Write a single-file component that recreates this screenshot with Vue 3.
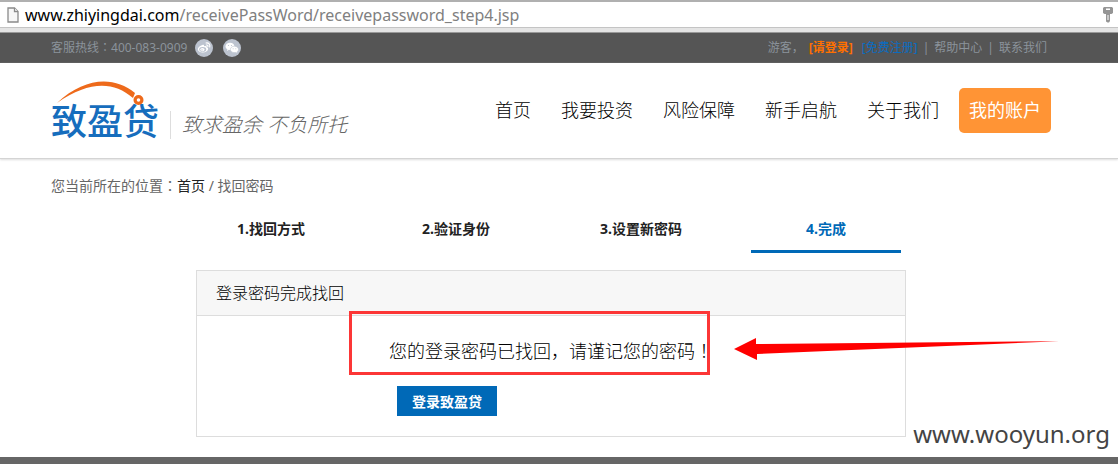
<script setup>
const nav = ['首页', '我要投资', '风险保障', '新手启航', '关于我们']
const steps = ['1.找回方式', '2.验证身份', '3.设置新密码', '4.完成']
const activeStep = 3
</script>

<template>
  <div class="page">
    <div class="address">
      <svg class="doc" width="12" height="16" viewBox="0 0 12 16" aria-hidden="true">
        <path d="M1 1h6.500l3.500 3.500V15H1z" fill="#f7f7f7" stroke="#8a8a8a" stroke-width="1.300" />
        <path d="M7.500 1v3.500H11" fill="#fff" stroke="#8a8a8a" stroke-width="1.300" />
      </svg>
      <span class="url"><span class="host">www.zhiyingdai.com</span>/receivePassWord/receivepassword_step4.jsp</span>
      <svg class="key" width="10" height="16" viewBox="0 0 10 16" aria-hidden="true">
        <path fill="#959595" fill-rule="evenodd" d="M1 0h8l1 1v5L8.500 7H7v7l-1 1.500H4.500L3 14.500V7H1.500L0 6V1zM3 1.500V3h4V1.500zM4.500 8v5h1V8z" />
      </svg>
    </div>

    <div class="topbar">
      <div class="wrap topbar-row">
        <span>客服热线<span class="mark">：</span>400-083-0909</span>
        <a class="social" href="#" aria-label="微博">
          <svg width="18" height="18" viewBox="0 0 18 18" aria-hidden="true">
            <circle cx="9" cy="9" r="9" fill="#bcc3cf" />
            <path fill="#fff" d="M7.300 6c1.200-.500 2 0 1.700 1.200 1.800-.700 3-.200 2.700 1.100 1 .300 1.600 1 1.400 1.900-.300 1.900-2.700 3.300-5.300 3.300-2.800 0-5-1.300-5-3.200C2.800 8.600 5 6.800 7.300 6z" />
            <ellipse cx="7.700" cy="10.400" rx="3.500" ry="2.300" fill="#bcc3cf" />
            <ellipse cx="7.400" cy="10.600" rx="2.100" ry="1.700" fill="#fff" />
            <circle cx="7" cy="10.900" r=".7" fill="#bcc3cf" />
            <path fill="none" stroke="#fff" stroke-width="1.100" stroke-linecap="round" d="M11 4c2.700-.5 4.400 1.400 3.700 4M11.300 6c1.200-.2 1.900.500 1.600 1.600" />
          </svg>
        </a>
        <a class="social" href="#" aria-label="微信">
          <svg width="18" height="18" viewBox="0 0 18 18" aria-hidden="true">
            <circle cx="9" cy="9" r="9" fill="#bcc3cf" />
            <path fill="#fff" d="M7 3.800c2.500 0 4.500 1.600 4.500 3.600S9.500 11 7 11l-1.200-.2L4 11.900l.4-1.700C3.200 9.600 2.500 8.600 2.500 7.400c0-2 2-3.600 4.500-3.600z" />
            <path fill="#fff" stroke="#bcc3cf" stroke-width=".6" d="M11.400 7.200c2.300 0 4.100 1.400 4.100 3.200 0 1-.6 1.900-1.500 2.500l.3 1.400-1.600-.8-1.300.1c-2.200 0-4-1.400-4-3.200s1.800-3.200 4-3.200z" />
            <g fill="#bcc3cf"><circle cx="5.500" cy="6.500" r=".6" /><circle cx="8.500" cy="6.500" r=".6" /><circle cx="10.100" cy="9.700" r=".5" /><circle cx="12.800" cy="9.700" r=".5" /></g>
          </svg>
        </a>
        <div class="account-links">
          <span>游客，</span>
          <a class="login" href="#">[请登录]</a>
          <a class="register" href="#">[免费注册]</a>
          <span>|</span>
          <a href="#">帮助中心</a>
          <span>|</span>
          <a href="#">联系我们</a>
        </div>
      </div>
    </div>

    <header class="header">
      <div class="wrap header-row">
        <a class="logo" href="#">
          <svg class="swoosh" width="108" height="28" viewBox="0 0 108 28" aria-hidden="true">
            <path fill="#ee6a1b" d="M6 22C34-4 63-5 84 12l-2 5C62 0 38 0 6 22z" />
            <circle cx="87.500" cy="19" r="3.400" fill="#fff" stroke="#ee6a1b" stroke-width="3.200" />
          </svg>
          <span class="brand">致盈贷</span>
        </a>
        <span class="slogan">致求盈余 不负所托</span>
        <nav class="nav">
          <a v-for="item in nav" :key="item" href="#">{{ item }}</a>
          <a class="mine" href="#">我的账户</a>
        </nav>
      </div>
    </header>

    <main class="wrap main">
      <div class="crumbs">您当前所在的位置<span class="mark">：</span><a href="#">首页</a> / 找回密码</div>

      <div class="flow">
        <ol class="steps">
          <li v-for="(step, i) in steps" :key="step" :class="{ active: i === activeStep }">{{ step }}</li>
        </ol>

        <section class="panel">
          <h1>登录密码完成找回</h1>
          <div class="panel-body">
            <p>您的登录密码已找回，请谨记您的密码<span class="mark">！</span></p>
            <button type="button">登录致盈贷</button>
          </div>
          <div class="highlight"></div>
          <svg class="arrow" width="326" height="24" viewBox="0 0 326 24" aria-hidden="true">
            <path fill="#f00" d="M0 12L22 1v6L325 4.200 23 17v6z" />
          </svg>
        </section>
      </div>
    </main>

    <footer class="footer"></footer>
    <div class="watermark">www.wooyun.org</div>
  </div>
</template>

<style>
body {
  margin: 0;
  background: #fff;
}
</style>

<style scoped>
.page {
  position: relative;
  overflow: hidden;
  font-family: "Noto Sans", "Noto Sans CJK SC", sans-serif;
  color: #222;
}
a {
  color: inherit;
  text-decoration: none;
}
.wrap {
  padding: 0 67px 0 51px;
}
/* Full-width marks centred in their cell */
.mark {
  font-family: "Noto Sans CJK TC", sans-serif;
  line-height: 1;
}
.address {
  display: flex;
  align-items: center;
  height: 24px;
  padding: 1px 5px 0 7px;
  border-top: 2px solid #b0b0b0;
  border-bottom: 1px solid #c4c4c4;
}
.url {
  flex: 1;
  margin-left: 6px;
  font-size: 16px;
  line-height: 24px;
  color: #808080;
}
.host {
  color: #000;
}
.topbar {
  border-top: 4px solid #e4e4e4;
  background: #555;
  box-shadow: inset 0 1px #999;
}
.topbar-row {
  display: flex;
  align-items: center;
  height: 31px;
  font-size: 12px;
  line-height: 18px;
  color: #8b939b;
}
.social {
  display: flex;
  margin-left: 10px;
}
.social:first-of-type {
  margin-left: 8px;
}
.account-links {
  display: flex;
  gap: 5px;
  margin-left: auto;
  padding-right: 4px;
}
.login {
  font-weight: 700;
  color: #ff7000;
}
.register {
  margin-left: 4px;
  color: #0a6cc0;
}
.header {
  border-bottom: 1px solid #d4d4d4;
  box-shadow: 0 1px 2px #ddd;
}
.header-row {
  display: flex;
  align-items: center;
  height: 95px;
}
.logo {
  position: relative;
  padding-top: 23px;
}
.swoosh {
  position: absolute;
  top: 2px;
  left: 0;
}
.brand {
  display: block;
  font-size: 36px;
  line-height: 40px;
  font-weight: 500;
  color: #166dbd;
}
.slogan {
  margin: 28px 0 0 11px;
  padding-left: 11px;
  border-left: 1px solid #ddd;
  font-size: 20px;
  line-height: 28px;
  font-style: italic;
  font-weight: 300;
  color: #666;
}
.nav {
  display: flex;
  gap: 10px;
  margin-left: auto;
  font-size: 18px;
  line-height: 45px;
  font-weight: 300;
  color: #000;
}
.nav a {
  padding: 0 10px;
}
.nav .mine {
  border-radius: 5px;
  background: #ff9435;
  color: #fff;
  font-weight: 400;
}
.crumbs {
  padding-top: 17px;
  font-size: 14px;
  line-height: 20px;
  color: #666;
}
.crumbs a {
  color: #222;
}
.flow {
  max-width: 710px;
  margin: 12px auto 0;
}
.steps {
  display: flex;
  gap: 35px;
  margin: 0;
  padding: 0 5px 0 0;
  list-style: none;
  font-size: 14px;
  line-height: 42px;
  font-weight: 700;
  text-align: center;
}
.steps li {
  flex: 1;
  border-bottom: 3px solid transparent;
}
.steps .active {
  border-color: #0069b7;
  color: #0069b7;
}
.panel {
  position: relative;
  margin-top: 17px;
  border: 1px solid #ddd;
}
.panel h1 {
  margin: 0;
  padding: 0 19px;
  border-bottom: 1px solid #ddd;
  background: #f7f7f7;
  font-size: 16px;
  line-height: 44px;
  font-weight: 300;
  color: #000;
}
.panel-body {
  padding: 20px 0;
}
.panel-body p {
  margin: 0 0 20px;
  font-size: 18px;
  line-height: 30px;
  font-weight: 300;
  text-align: center;
  color: #000;
}
.panel-body button {
  display: block;
  width: 100px;
  height: 30px;
  margin-left: 200px;
  padding: 0;
  border: 0;
  background: #0069b7;
  color: #fff;
  font-family: inherit;
  font-size: 14px;
  font-weight: 700;
}
.highlight {
  position: absolute;
  top: 40px;
  left: 152px;
  width: 355px;
  height: 58px;
  border: 3px solid #fc3636;
}
.arrow {
  position: absolute;
  top: 66px;
  left: 537px;
}
.footer {
  height: 7px;
  margin-top: 20px;
  background: #666;
}
.watermark {
  position: absolute;
  right: 8px;
  bottom: 12px;
  font-size: 24px;
  line-height: 36px;
  color: #444;
}
</style>
